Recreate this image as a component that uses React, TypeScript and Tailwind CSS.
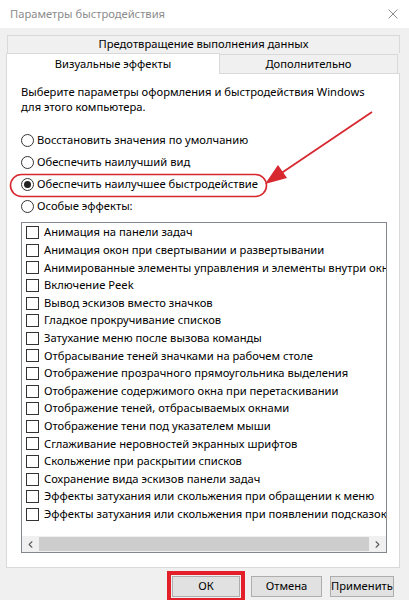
import { ChevronLeft, ChevronRight } from "lucide-react";

const EFFECTS = [
  "Анимация на панели задач",
  "Анимация окон при свертывании и развертывании",
  "Анимированные элементы управления и элементы внутри окна",
  "Включение Peek",
  "Вывод эскизов вместо значков",
  "Гладкое прокручивание списков",
  "Затухание меню после вызова команды",
  "Отбрасывание теней значками на рабочем столе",
  "Отображение прозрачного прямоугольника выделения",
  "Отображение содержимого окна при перетаскивании",
  "Отображение теней, отбрасываемых окнами",
  "Отображение тени под указателем мыши",
  "Сглаживание неровностей экранных шрифтов",
  "Скольжение при раскрытии списков",
  "Сохранение вида эскизов панели задач",
  "Эффекты затухания или скольжения при обращении к меню",
  "Эффекты затухания или скольжения при появлении подсказок",
];

const OPTIONS = [
  { label: "Восстановить значения по умолчанию", checked: false },
  { label: "Обеспечить наилучший вид", checked: false },
  { label: "Обеспечить наилучшее быстродействие", checked: true },
  { label: "Особые эффекты:", checked: false },
];

function Radio({ label, checked }: { label: string; checked: boolean }) {
  return (
    <div className="flex h-[22px] items-center gap-[3px]">
      <span className="flex h-[13px] w-[13px] items-center justify-center rounded-full border border-[#333] bg-white">
        {checked && <span className="h-[7px] w-[7px] rounded-full bg-[#222]" />}
      </span>
      <span>{label}</span>
    </div>
  );
}

function Button({ label }: { label: string }) {
  return (
    <button className="flex h-[21px] items-center justify-center border border-[#adadad] bg-[#e1e1e1] text-[11.2px] text-black">
      {label}
    </button>
  );
}

export default function App() {
  return (
    <div
      className="relative h-[600px] w-[409px] overflow-hidden bg-[#f0f0f0] text-[11.2px] text-black"
      style={{ fontFamily: '"Noto Sans", "Open Sans", sans-serif' }}
    >
      {/* Title bar */}
      <div className="flex h-[28px] items-center justify-between bg-white pl-[10px] pr-[10px]">
        <span className="text-[#8c8c8c]">Параметры быстродействия</span>
        <svg width="10" height="10" viewBox="0 0 10 10" className="mr-[1px]">
          <path d="M0.5 0.5 L9.5 9.5 M9.5 0.5 L0.5 9.5" stroke="#8c8c8c" strokeWidth="1" />
        </svg>
      </div>

      {/* Tabs */}
      <div className="ml-[6px] mr-[9px] mt-[7px] flex flex-col">
        <div className="ml-[1px] flex h-[18px] items-center justify-center border border-b-0 border-[#d9d9d9] bg-[#f0f0f0]">
          Предотвращение выполнения данных
        </div>
        <div className="flex h-[20px]">
          <div className="relative z-10 flex h-[21px] w-[214px] items-center justify-center border border-b-0 border-[#d9d9d9] bg-white">
            Визуальные эффекты
          </div>
          <div className="mr-[2px] mt-[1px] flex flex-1 items-center justify-center border border-b-0 border-l-0 border-[#d9d9d9] bg-[#f0f0f0]">
            Дополнительно
          </div>
        </div>

        {/* Panel */}
        <div className="flex h-[495px] flex-col border border-[#d9d9d9] bg-white pl-[14px] pr-[12px] pt-[10px]">
          <p className="whitespace-nowrap leading-[15px]">
            Выберите параметры оформления и быстродействия Windows
            <br />
            для этого компьютера.
          </p>
          <div className="mt-[15px] flex flex-col">
            {OPTIONS.map((o) => (
              <Radio key={o.label} label={o.label} checked={o.checked} />
            ))}
          </div>

          {/* List */}
          <div className="mt-[5px] flex h-[331px] flex-col border border-[#828790] bg-white">
            <div className="flex-1 overflow-hidden pt-[1px]">
              {EFFECTS.map((e) => (
                <div key={e} className="flex h-[17.6px] items-center gap-[5px] whitespace-nowrap pl-[4px]">
                  <span className="h-[13px] w-[13px] shrink-0 border border-[#333] bg-white" />
                  <span>{e}</span>
                </div>
              ))}
            </div>
            <div className="flex h-[16px] items-center bg-[#f0f0f0]">
              <span className="flex w-[17px] items-center justify-center text-[#606060]">
                <ChevronLeft size={11} strokeWidth={2.5} />
              </span>
              <span className="h-[14px] flex-1 bg-[#cdcdcd]" />
              <span className="flex w-[17px] items-center justify-center text-[#606060]">
                <ChevronRight size={11} strokeWidth={2.5} />
              </span>
            </div>
          </div>
        </div>
      </div>

      {/* Buttons */}
      <div className="mt-[3px] flex items-start pl-[167px]">
        <div className="border-[4px] border-[#e3202a] p-px">
          <div className="flex w-[68px] flex-col">
            <Button label="ОК" />
          </div>
        </div>
        <div className="ml-[6px] mt-[5px] flex w-[71px] flex-col">
          <Button label="Отмена" />
        </div>
        <div className="ml-[8px] mt-[5px] flex w-[64px] flex-col">
          <Button label="Применить" />
        </div>
      </div>

      {/* Annotation overlay */}
      <svg className="pointer-events-none absolute left-0 top-0" width="409" height="600">
        <rect x="10.5" y="174.5" width="256" height="22" rx="11" fill="none" stroke="#d8282f" strokeWidth="1.6" />
        <line x1="372" y1="112" x2="280" y2="174" stroke="#d8282f" strokeWidth="1.8" />
        <polygon points="265,184 287,178 278,165" fill="#d8282f" />
      </svg>
    </div>
  );
}
